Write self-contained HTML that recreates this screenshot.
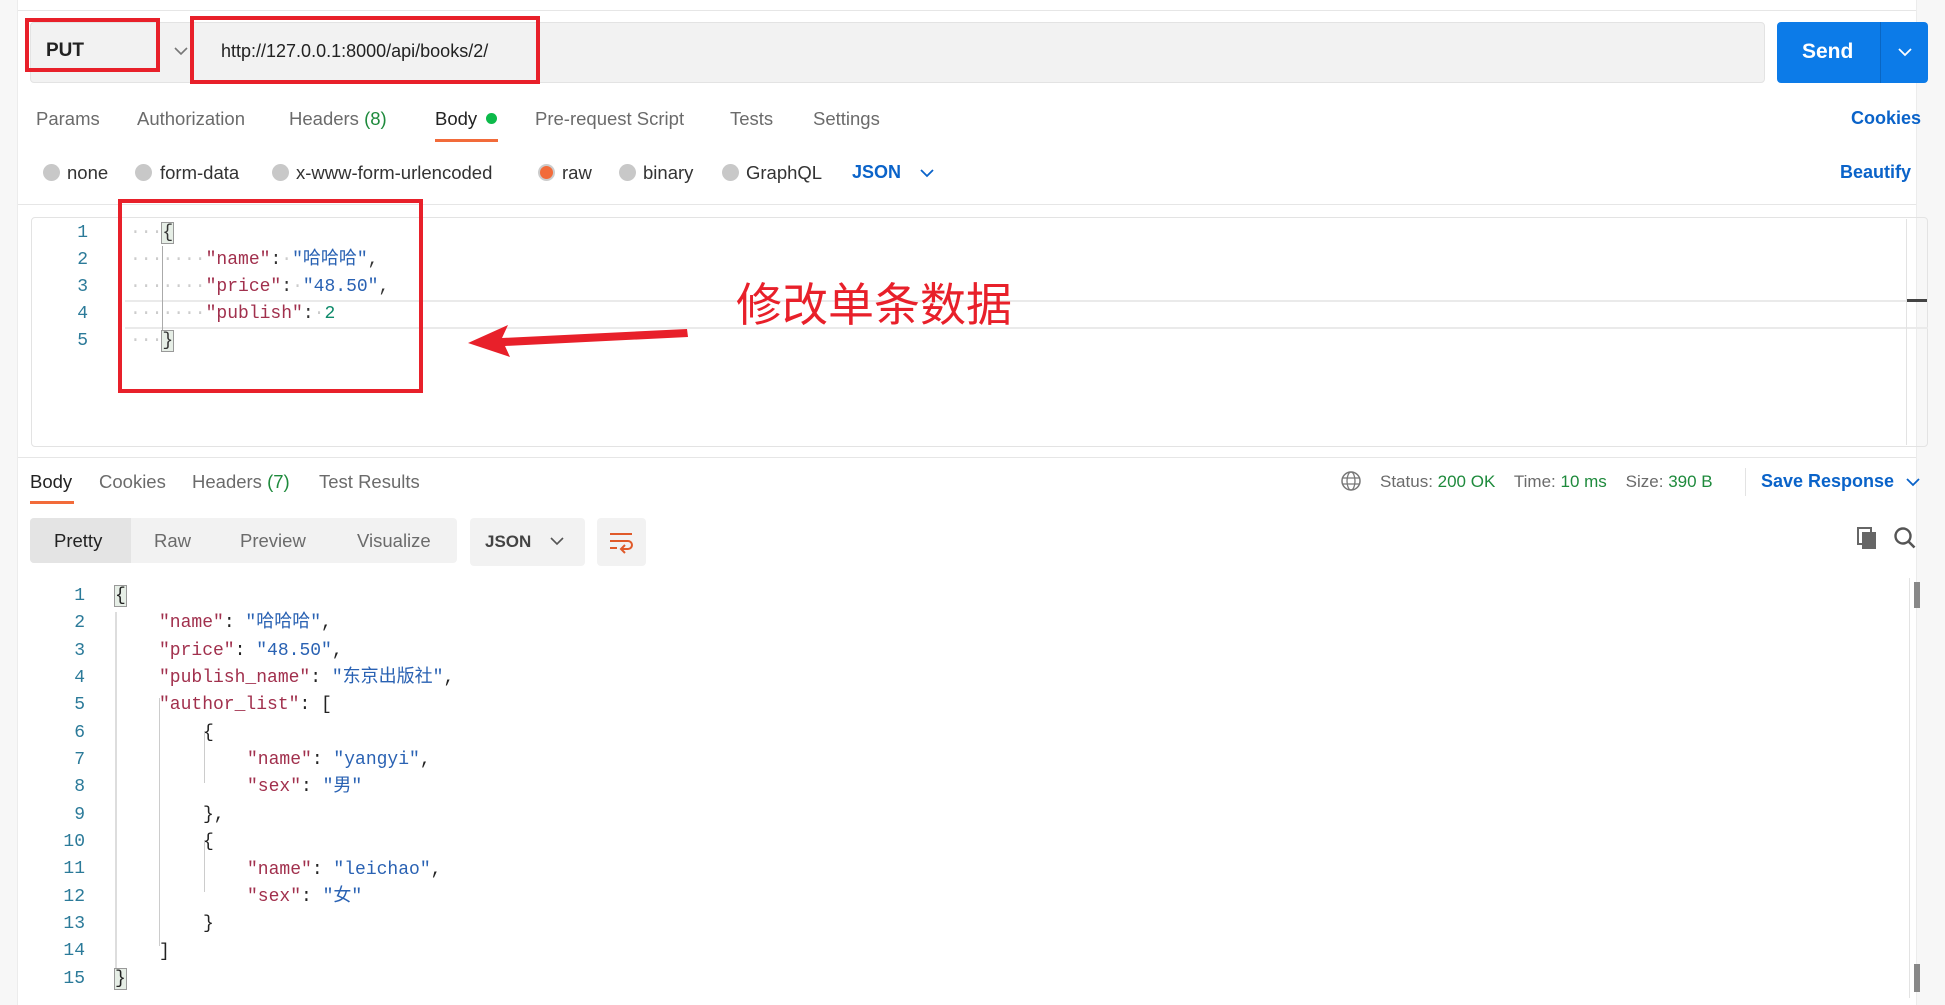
<!DOCTYPE html>
<html><head><meta charset="utf-8"><style>
*{margin:0;padding:0;box-sizing:border-box}
body{width:1945px;height:1005px;position:relative;background:#fff;font-family:"Liberation Sans","Noto Sans CJK SC",sans-serif;color:#333;overflow:hidden}
.a{position:absolute;white-space:nowrap}
.t{font-size:18.5px;color:#6b6b6b}
.m{font-family:"Liberation Mono","Noto Sans CJK SC",monospace;font-size:18px;line-height:27px;height:27px}
.k{color:#a1304d}.s{color:#2a62b3}.n{color:#0e8a6a}.d{color:#ccc}
.ln{color:#2b7a99;text-align:right;width:40px}
.rb{position:absolute;border:4px solid #e8202a}
.rad{position:absolute;width:17px;height:17px;border-radius:50%;background:#c8c8c8;top:164px}
.g{color:#1e8a3c}
.rl{position:absolute;left:0;white-space:nowrap;height:27.35px;line-height:27.35px}
</style></head><body>
<div class="a" style="left:0;top:0;width:18px;height:1005px;background:#f7f7f7;border-right:1px solid #ececec"></div>
<div class="a" style="left:1916px;top:0;width:29px;height:1005px;background:#f7f7f7;border-left:1px solid #ececec"></div>
<div class="a" style="left:18px;top:10px;width:1898px;height:1px;background:#e6e6e6"></div>

<div class="a" style="left:30px;top:22px;width:1735px;height:61px;background:#f2f2f2;border:1px solid #e3e3e3;border-radius:4px"></div>
<div class="a" style="left:191px;top:24px;width:1px;height:57px;background:#e0e0e0"></div>
<div class="a" style="left:46px;top:40px;font-size:19px;font-weight:bold;color:#222">PUT</div>
<svg class="a" style="left:173px;top:45px" width="16" height="12"><path d="M2 3l6 6 6-6" fill="none" stroke="#777" stroke-width="1.6"/></svg>
<div class="a" style="left:221px;top:41px;font-size:18px;color:#222">http://127.0.0.1:8000/api/books/2/</div>
<div class="rb" style="left:25px;top:18px;width:135px;height:54px"></div>
<div class="rb" style="left:190px;top:16px;width:350px;height:68px"></div>
<div class="a" style="left:1777px;top:22px;width:151px;height:61px;background:#0c7be8;border-radius:4px"></div>
<div class="a" style="left:1880px;top:22px;width:1px;height:61px;background:#0a66c2"></div>
<div class="a" style="left:1802px;top:40px;font-size:21px;font-weight:bold;color:#fff">Send</div>
<svg class="a" style="left:1897px;top:46px" width="16" height="12"><path d="M2 3l6 6 6-6" fill="none" stroke="#fff" stroke-width="1.8"/></svg>

<div class="a t" style="left:36px;top:108px">Params</div>
<div class="a t" style="left:137px;top:108px">Authorization</div>
<div class="a t" style="left:289px;top:108px">Headers <span class="g">(8)</span></div>
<div class="a t" style="left:435px;top:108px;color:#222">Body</div>
<div class="a" style="left:486px;top:113px;width:11px;height:11px;border-radius:50%;background:#0cba4a"></div>
<div class="a" style="left:435px;top:139px;width:63px;height:3px;background:#f26b3a"></div>
<div class="a t" style="left:535px;top:108px">Pre-request Script</div>
<div class="a t" style="left:730px;top:108px">Tests</div>
<div class="a t" style="left:813px;top:108px">Settings</div>
<div class="a" style="left:1851px;top:108px;font-size:18px;color:#0a63c9;font-weight:bold">Cookies</div>

<div class="rad" style="left:43px"></div><div class="a t" style="left:67px;top:162px;color:#333">none</div>
<div class="rad" style="left:135px"></div><div class="a t" style="left:160px;top:162px;color:#333">form-data</div>
<div class="rad" style="left:272px"></div><div class="a t" style="left:296px;top:162px;color:#333">x-www-form-urlencoded</div>
<div class="rad" style="left:538px;background:#f26b3a;border:2px solid #ccc"></div><div class="a t" style="left:562px;top:162px;color:#333">raw</div>
<div class="rad" style="left:619px"></div><div class="a t" style="left:643px;top:162px;color:#333">binary</div>
<div class="rad" style="left:722px"></div><div class="a t" style="left:746px;top:162px;color:#333">GraphQL</div>
<div class="a" style="left:852px;top:162px;font-size:18px;font-weight:bold;color:#0a63c9">JSON</div>
<svg class="a" style="left:919px;top:167px" width="16" height="12"><path d="M2 3l6 6 6-6" fill="none" stroke="#0a63c9" stroke-width="1.8"/></svg>
<div class="a" style="left:1840px;top:162px;font-size:18px;font-weight:bold;color:#0a63c9">Beautify</div>
<div class="a" style="left:18px;top:204px;width:1898px;height:1px;background:#e6e6e6"></div>

<div class="a" style="left:31px;top:217px;width:1897px;height:230px;border:1px solid #e3e3e3;border-radius:4px"></div>
<div class="a" style="left:125px;top:300px;width:1803px;height:29px;border-top:2px solid #eaeaea;border-bottom:2px solid #eaeaea"></div>
<div class="a" style="left:1906px;top:219px;width:1px;height:226px;background:#e3e3e3"></div>
<div class="a" style="left:1907px;top:299px;width:20px;height:3px;background:#444"></div>
<div class="a" style="left:162px;top:246px;width:1px;height:84px;background:#aaa"></div>
<div class="m ln a" style="left:48px;top:220px">1</div>
<div class="m ln a" style="left:48px;top:247px">2</div>
<div class="m ln a" style="left:48px;top:274px">3</div>
<div class="m ln a" style="left:48px;top:301px">4</div>
<div class="m ln a" style="left:48px;top:328px">5</div>
<div class="a m" style="left:130px;top:220px"><span class="d">···</span><span style="background:#e6eee6;outline:1px solid #999">{</span></div>
<div class="a m" style="left:130px;top:247px"><span class="d">·······</span><span class="k">"name"</span>:<span class="d">·</span><span class="s">"哈哈哈"</span>,</div>
<div class="a m" style="left:130px;top:274px"><span class="d">·······</span><span class="k">"price"</span>:<span class="d">·</span><span class="s">"48.50"</span>,</div>
<div class="a m" style="left:130px;top:301px"><span class="d">·······</span><span class="k">"publish"</span>:<span class="d">·</span><span class="n">2</span></div>
<div class="a m" style="left:130px;top:328px"><span class="d">···</span><span style="background:#e6eee6;outline:1px solid #999">}</span></div>
<div class="rb" style="left:118px;top:199px;width:305px;height:194px"></div>
<div class="a" style="left:736px;top:272px;font-size:46px;color:#e8202a;font-family:'Noto Sans CJK SC',sans-serif;line-height:60px">修改单条数据</div>
<svg class="a" style="left:460px;top:310px" width="240" height="50"><path d="M227 19 L42 28 L48 15 L8 33 L50 47 L45 36 L228 27 Z" fill="#e8202a"/></svg>
<div class="a" style="left:18px;top:457px;width:1898px;height:1px;background:#e6e6e6"></div>

<div class="a t" style="left:30px;top:471px;color:#222">Body</div>
<div class="a" style="left:30px;top:501px;width:44px;height:3px;background:#f26b3a"></div>
<div class="a t" style="left:99px;top:471px">Cookies</div>
<div class="a t" style="left:192px;top:471px">Headers <span class="g">(7)</span></div>
<div class="a t" style="left:319px;top:471px">Test Results</div>
<svg class="a" style="left:1340px;top:470px" width="22" height="22"><circle cx="11" cy="11" r="9" fill="none" stroke="#777" stroke-width="1.5"/><ellipse cx="11" cy="11" rx="4" ry="9" fill="none" stroke="#777" stroke-width="1.3"/><path d="M2 8h18M2 14h18" stroke="#777" stroke-width="1.3"/></svg>
<div class="a" style="left:1380px;top:472px;font-size:17px;color:#6b6b6b">Status: <span class="g">200 OK</span>&nbsp;&nbsp;&nbsp; Time: <span class="g">10 ms</span>&nbsp;&nbsp;&nbsp; Size: <span class="g">390 B</span></div>
<div class="a" style="left:1745px;top:468px;width:1px;height:28px;background:#e3e3e3"></div>
<div class="a" style="left:1761px;top:471px;font-size:18px;font-weight:bold;color:#0a63c9">Save Response</div>
<svg class="a" style="left:1905px;top:476px" width="16" height="12"><path d="M2 3l6 6 6-6" fill="none" stroke="#0a63c9" stroke-width="1.8"/></svg>

<div class="a" style="left:30px;top:518px;width:427px;height:45px;background:#f2f2f2;border-radius:4px"></div>
<div class="a" style="left:30px;top:518px;width:101px;height:45px;background:#e4e4e4;border-radius:4px 0 0 4px"></div>
<div class="a" style="left:54px;top:530px;font-size:18.5px;color:#222">Pretty</div>
<div class="a t" style="left:154px;top:530px">Raw</div>
<div class="a t" style="left:240px;top:530px">Preview</div>
<div class="a t" style="left:357px;top:530px">Visualize</div>
<div class="a" style="left:470px;top:518px;width:115px;height:48px;background:#f2f2f2;border-radius:4px"></div>
<div class="a" style="left:485px;top:532px;font-size:17px;font-weight:bold;color:#444">JSON</div>
<svg class="a" style="left:549px;top:535px" width="16" height="12"><path d="M2 3l6 6 6-6" fill="none" stroke="#555" stroke-width="1.6"/></svg>
<div class="a" style="left:597px;top:518px;width:49px;height:48px;background:#f2f2f2;border-radius:4px"></div>
<svg class="a" style="left:608px;top:530px" width="28" height="24"><path d="M2 4h22M2 11h18a4 4 0 0 1 0 8h-6M2 18h7" fill="none" stroke="#e05a2a" stroke-width="2"/><path d="M17 15l-4 4 4 4" fill="none" stroke="#e05a2a" stroke-width="2"/></svg>
<svg class="a" style="left:1856px;top:526px" width="22" height="24"><rect x="2" y="2" width="13" height="16" fill="none" stroke="#666" stroke-width="2"/><rect x="6" y="6" width="14" height="17" fill="#666"/></svg>
<svg class="a" style="left:1893px;top:526px" width="24" height="24"><circle cx="10" cy="10" r="7.5" fill="none" stroke="#555" stroke-width="2.4"/><path d="M15.5 15.5l6 6" stroke="#555" stroke-width="2.6"/></svg>

<div class="a" style="left:1909px;top:578px;width:1px;height:420px;background:#e3e3e3"></div>
<div class="a" style="left:1914px;top:582px;width:6px;height:26px;background:#888"></div>
<div class="a" style="left:1914px;top:964px;width:6px;height:28px;background:#888"></div>

<div class="a" style="left:115px;top:612px;width:2px;height:362px;background:#ddd"></div>
<div class="a" style="left:159px;top:698px;width:1px;height:248px;background:#ccc"></div>
<div class="a" style="left:204px;top:731px;width:1px;height:52px;background:#ccc"></div>
<div class="a" style="left:204px;top:840px;width:1px;height:52px;background:#ccc"></div>

<div class="a m" style="left:45px;top:583px;width:40px;height:420px;line-height:27.35px;color:#2b7a99;text-align:right">1<br>2<br>3<br>4<br>5<br>6<br>7<br>8<br>9<br>10<br>11<br>12<br>13<br>14<br>15</div>
<div class="a" style="left:115px;top:583px;width:800px;height:420px;font-family:'Liberation Mono','Noto Sans CJK SC',monospace;font-size:18px;color:#222">
<div class="rl" style="top:0"><span style="background:#e6eee6;outline:1px solid #999">{</span></div>
<div class="rl" style="top:27.35px;left:44px"><span class="k">"name"</span>: <span class="s">"哈哈哈"</span>,</div>
<div class="rl" style="top:54.7px;left:44px"><span class="k">"price"</span>: <span class="s">"48.50"</span>,</div>
<div class="rl" style="top:82.05px;left:44px"><span class="k">"publish_name"</span>: <span class="s">"东京出版社"</span>,</div>
<div class="rl" style="top:109.4px;left:44px"><span class="k">"author_list"</span>: [</div>
<div class="rl" style="top:136.75px;left:88px">{</div>
<div class="rl" style="top:164.1px;left:132px"><span class="k">"name"</span>: <span class="s">"yangyi"</span>,</div>
<div class="rl" style="top:191.45px;left:132px"><span class="k">"sex"</span>: <span class="s">"男"</span></div>
<div class="rl" style="top:218.8px;left:88px">},</div>
<div class="rl" style="top:246.15px;left:88px">{</div>
<div class="rl" style="top:273.5px;left:132px"><span class="k">"name"</span>: <span class="s">"leichao"</span>,</div>
<div class="rl" style="top:300.85px;left:132px"><span class="k">"sex"</span>: <span class="s">"女"</span></div>
<div class="rl" style="top:328.2px;left:88px">}</div>
<div class="rl" style="top:355.55px;left:44px">]</div>
<div class="rl" style="top:382.9px"><span style="background:#e6eee6;outline:1px solid #999">}</span></div>
</div>
</body></html>
